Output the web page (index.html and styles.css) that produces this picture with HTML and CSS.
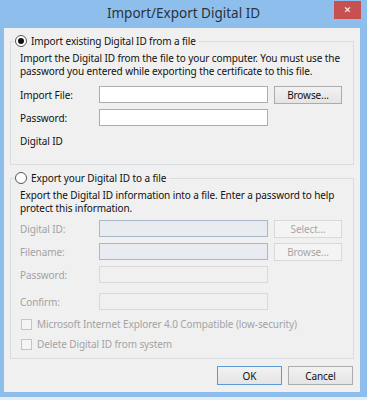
FILE: index.html
```html
<!DOCTYPE html>
<html lang="en">
<head>
  <meta charset="UTF-8" />
  <meta name="viewport" content="width=device-width, initial-scale=1.0" />
  <title>Import/Export Digital ID</title>
  <link rel="stylesheet" href="styles.css">
</head>
<body>
  <div class="window">
    <div class="titlebar">
      <span class="title">Import/Export Digital ID</span>
      <button class="close">&#x2715;</button>
    </div>

    <div class="client">
      <fieldset class="group">
        <legend><span class="radio checked"></span>Import existing Digital ID from a file</legend>
        <p class="desc">Import the Digital ID from the file to your computer. You must use the<br>password you entered while exporting the certificate to this file.</p>
        <div class="rows">
          <div class="row">
            <span class="label">Import File:</span>
            <span class="field"></span>
            <button class="btn">Browse...</button>
          </div>
          <div class="row">
            <span class="label">Password:</span>
            <span class="field"></span>
          </div>
          <div class="row">
            <span class="label">Digital ID</span>
          </div>
        </div>
      </fieldset>

      <fieldset class="group second">
        <legend><span class="radio"></span>Export your Digital ID to a file</legend>
        <p class="desc">Export the Digital ID information into a file. Enter a password to help<br>protect this information.</p>
        <div class="rows">
          <div class="row">
            <span class="label off">Digital ID:</span>
            <span class="field off blue"></span>
            <button class="btn" disabled>Select...</button>
          </div>
          <div class="row">
            <span class="label off">Filename:</span>
            <span class="field off blue"></span>
            <button class="btn" disabled>Browse...</button>
          </div>
          <div class="row">
            <span class="label off">Password:</span>
            <span class="field off"></span>
          </div>
          <div class="row last">
            <span class="label off">Confirm:</span>
            <span class="field off"></span>
          </div>
        </div>
        <div class="checks">
          <div class="check"><span class="box"></span>Microsoft Internet Explorer 4.0 Compatible (low-security)</div>
          <div class="check"><span class="box"></span>Delete Digital ID from system</div>
        </div>
      </fieldset>

      <div class="actions">
        <button class="btn default">OK</button>
        <button class="btn">Cancel</button>
      </div>
    </div>
  </div>
</body>
</html>
```

FILE: styles.css
```css
* {
  box-sizing: border-box;
  margin: 0;
  padding: 0;
}
body {
  background: #e6edf4;
  font-family: 'Noto Sans', 'Open Sans', sans-serif;
  font-size: 10px;
  letter-spacing: -0.1px;
  color: #111;
}
.window {
  width: 367px;
  height: 397px;
  background: #8ebfec;
  padding: 0 7px 5px 4px;
  display: flex;
  flex-direction: column;
}
.titlebar {
  height: 28px;
  display: flex;
  justify-content: center;
  align-items: center;
  position: relative;
}
.title {
  font-size: 13.5px;
  letter-spacing: 0;
  color: #2a323c;
  padding-left: 3px;
  padding-bottom: 2px;
}
.close {
  position: absolute;
  top: 1px;
  right: -1px;
  width: 27px;
  height: 18px;
  border: none;
  background: #c75050;
  color: #fff;
  font-size: 9px;
  font-weight: bold;
  font-family: 'DejaVu Sans', sans-serif;
}
.client {
  flex: 1;
  background: #f0f0f0;
  padding-top: 6px;
  display: flex;
  flex-direction: column;
}
.group {
  margin: 0 6px;
  border: 1px solid #d8dde2;
  padding: 0 9px 15px 9px;
}
.group.second {
  margin-top: 6px;
  padding-bottom: 7px;
}
.group legend {
  display: flex;
  align-items: center;
  gap: 4px;
  height: 14px;
  margin-left: -6px;
  padding: 0 3px 0 1px;
}
.radio {
  width: 12px;
  height: 12px;
  border-radius: 50%;
  border: 1px solid #555;
  background: #fff;
  display: flex;
  justify-content: center;
  align-items: center;
}
.radio.checked::after {
  content: '';
  width: 6px;
  height: 6px;
  border-radius: 50%;
  background: #111;
}
.desc {
  margin-top: 4px;
  line-height: 12.5px;
  white-space: nowrap;
}
.rows {
  display: flex;
  flex-direction: column;
  gap: 6px;
  margin-top: 9px;
}
.second .rows {
  margin-top: 6px;
}
.row {
  display: flex;
  align-items: center;
  height: 17px;
}
.row.last {
  margin-top: 4px;
}
.label {
  width: 79px;
}
.label.off {
  color: #a3a3a3;
}
.field {
  width: 169px;
  height: 17px;
  border: 1px solid #abadb3;
  background: #fff;
}
.field.off {
  border-color: #d9d9d9;
  background: #f0f0f0;
}
.field.off.blue {
  border-color: #a9b8c8;
  background: #e8ebef;
}
.btn {
  font-family: inherit;
  font-size: 10px;
  letter-spacing: -0.1px;
  color: #111;
  height: 18px;
  border: 1px solid #acacac;
  background: linear-gradient(#f2f2f2, #e4e4e4);
}
.row .btn {
  width: 68px;
  margin-left: 6px;
}
.btn:disabled {
  color: #a6a6a6;
  border-color: #d9d9d9;
  background: #f4f4f4;
}
.checks {
  display: flex;
  flex-direction: column;
  gap: 6px;
  margin-top: 7px;
}
.check {
  display: flex;
  align-items: center;
  gap: 5px;
  height: 14px;
  color: #a3a3a3;
  padding-left: 1px;
}
.box {
  width: 11px;
  height: 11px;
  border: 1px solid #c4c4c4;
  background: #f4f4f4;
}
.actions {
  display: flex;
  justify-content: flex-end;
  gap: 6px;
  padding: 7px 7px 0 0;
}
.actions .btn {
  width: 65px;
  height: 19px;
}
.btn.default {
  border-color: #5b9bd5;
}
```
